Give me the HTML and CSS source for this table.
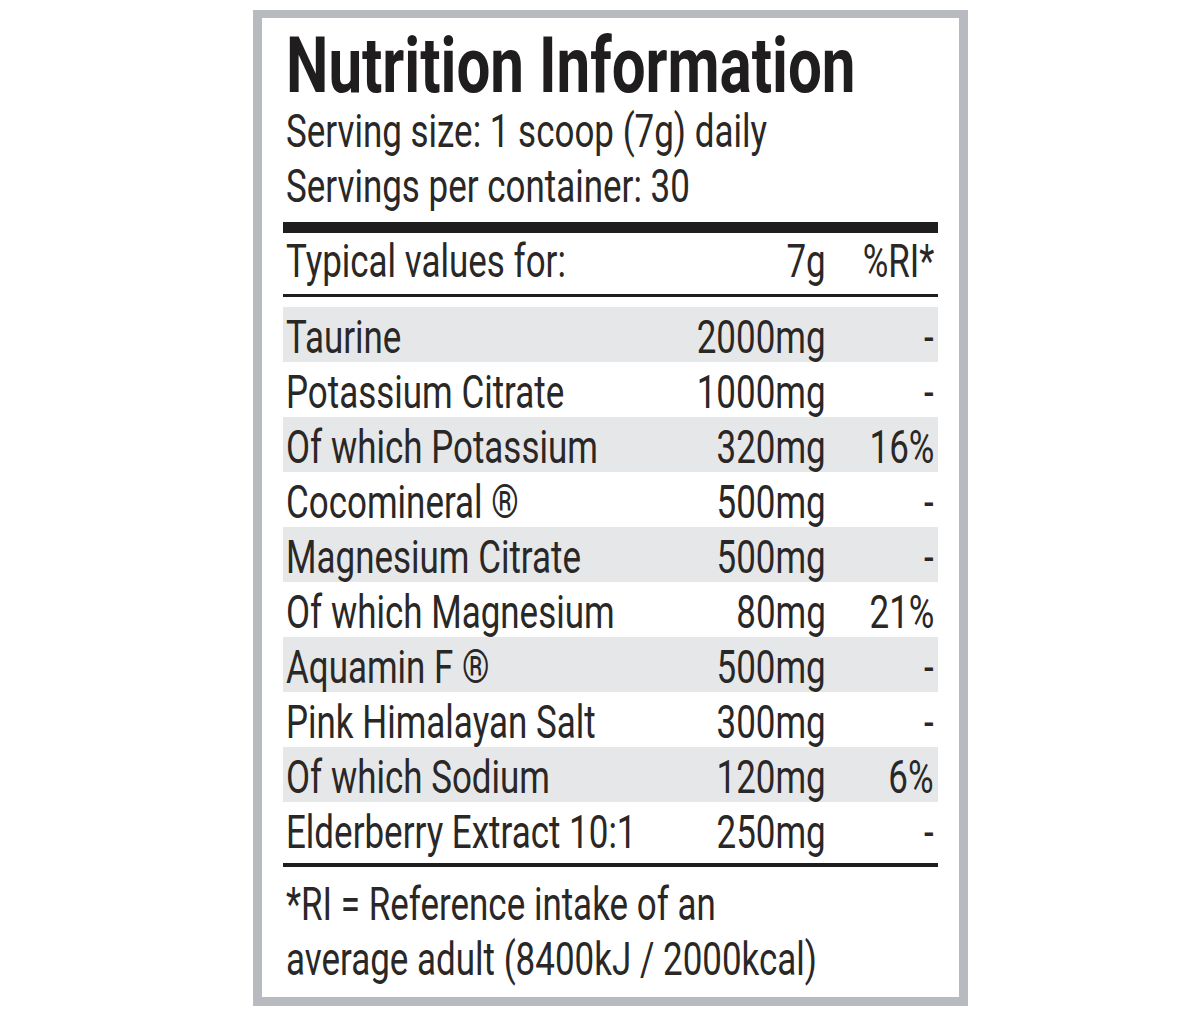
FILE: index.html
```html
<!DOCTYPE html>
<html lang="en">
<head>
<meta charset="utf-8">
<title>Nutrition Information</title>
<link rel="stylesheet" href="styles.css">
</head>
<body>
<div class="label">
  <h1 class="title"><span class="t">Nutrition Information</span></h1>
  <p class="line"><span class="t">Serving size: 1 scoop (7g) daily</span></p>
  <p class="line"><span class="t">Servings per container: 30</span></p>
  <div class="rule-thick"></div>
  <div class="row head"><span class="t">Typical values for:</span><span class="amt"><span class="t r">7g</span></span><span class="ri"><span class="t r">%RI*</span></span></div>
  <div class="rule-thin"></div>
  <div class="rows">
    <div class="row shade"><span class="t">Taurine</span><span class="amt"><span class="t r">2000mg</span></span><span class="ri"><span class="t r">-</span></span></div>
    <div class="row"><span class="t">Potassium Citrate</span><span class="amt"><span class="t r">1000mg</span></span><span class="ri"><span class="t r">-</span></span></div>
    <div class="row shade"><span class="t">Of which Potassium</span><span class="amt"><span class="t r">320mg</span></span><span class="ri"><span class="t r">16%</span></span></div>
    <div class="row"><span class="t">Cocomineral ®</span><span class="amt"><span class="t r">500mg</span></span><span class="ri"><span class="t r">-</span></span></div>
    <div class="row shade"><span class="t">Magnesium Citrate</span><span class="amt"><span class="t r">500mg</span></span><span class="ri"><span class="t r">-</span></span></div>
    <div class="row"><span class="t">Of which Magnesium</span><span class="amt"><span class="t r">80mg</span></span><span class="ri"><span class="t r">21%</span></span></div>
    <div class="row shade"><span class="t">Aquamin F ®</span><span class="amt"><span class="t r">500mg</span></span><span class="ri"><span class="t r">-</span></span></div>
    <div class="row"><span class="t">Pink Himalayan Salt</span><span class="amt"><span class="t r">300mg</span></span><span class="ri"><span class="t r">-</span></span></div>
    <div class="row shade"><span class="t">Of which Sodium</span><span class="amt"><span class="t r">120mg</span></span><span class="ri"><span class="t r">6%</span></span></div>
    <div class="row"><span class="t">Elderberry Extract 10:1</span><span class="amt"><span class="t r">250mg</span></span><span class="ri"><span class="t r">-</span></span></div>
  </div>
  <div class="rule-bottom"></div>
  <p class="line foot first"><span class="t">*RI = Reference intake of an</span></p>
  <p class="line foot"><span class="t">average adult (8400kJ / 2000kcal)</span></p>
</div>
</body>
</html>
```
FILE: styles.css
```css
html, body {
  margin: 0;
  padding: 0;
  background: #ffffff;
}
body {
  font-family: Roboto, "Liberation Sans", sans-serif;
  color: #2a2727;
}
.label {
  box-sizing: border-box;
  width: 715px;
  height: 996px;
  margin: 10px 0 0 253px;
  border: 9px solid #b7bbc0;
  border-top-width: 8px;
  padding: 10px 21px 0 21px;
  background: #ffffff;
  overflow: hidden;
}
.t {
  display: inline-block;
  white-space: nowrap;
  transform: scaleX(0.76);
  transform-origin: left center;
}
.t.r {
  transform-origin: right center;
}
.title {
  margin: 0;
  font-size: 77px;
  line-height: 76px;
  font-weight: 700;
  color: #1f1d1d;
  padding-left: 3px;
  white-space: nowrap;
}
.title .t {
  transform: scaleX(0.78);
}
.line {
  margin: 0;
  font-size: 46px;
  line-height: 55px;
  padding-left: 3px;
  white-space: nowrap;
}
.rule-thick {
  height: 11px;
  margin-top: 8px;
  background: #1f1d1d;
}
.rule-thin {
  height: 3px;
  margin-top: 6px;
  background: #1f1d1d;
}
.rule-bottom {
  height: 4px;
  margin-top: 6px;
  background: #1f1d1d;
}
.rows {
  margin-top: 10px;
}
.row {
  display: grid;
  grid-template-columns: minmax(0, 1fr) 200px 107px;
  height: 55px;
  box-sizing: border-box;
  padding: 4px 0 0 3px;
  font-size: 46px;
  line-height: 52px;
  white-space: nowrap;
}
.row.head {
  padding-top: 2px;
}
.row.shade {
  background: #e6e7e8;
}
.amt {
  text-align: right;
  padding-right: 5px;
}
.ri {
  text-align: right;
  padding-right: 4px;
}
.foot.first {
  margin-top: 10px;
}
```
